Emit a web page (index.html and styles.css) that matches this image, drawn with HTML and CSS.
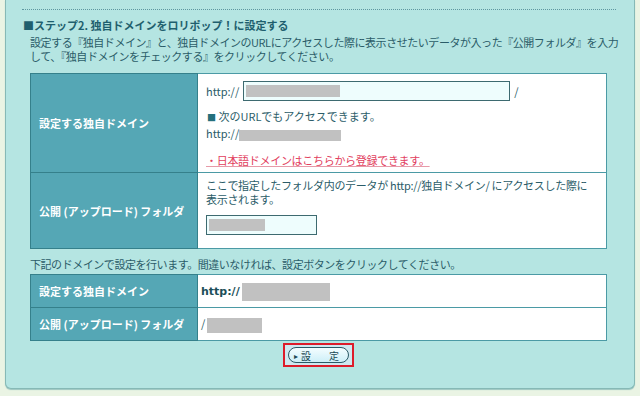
FILE: index.html
```html
<!DOCTYPE html>
<html lang="ja">
<head>
    <meta charset="UTF-8">
    <meta name="viewport" content="width=device-width, initial-scale=1.0">
    <link rel="stylesheet" href="styles.css">
    <title>独自ドメイン設定</title>
</head>
<body>
    <div class="panel">
        <div class="divider"></div>

        <h3 class="step-title">■ステップ2. 独自ドメインをロリポップ！に設定する</h3>
        <p class="lead">設定する『独自ドメイン』と、独自ドメインのURLにアクセスした際に表示させたいデータが入った『公開フォルダ』を入力して、『独自ドメインをチェックする』をクリックしてください。</p>

        <table class="form-table">
            <tr class="row-domain">
                <th>設定する独自ドメイン</th>
                <td>
                    <div class="url-line">
                        <span>http://</span>
                        <span class="text-box wide"><span class="mask mask-a"></span></span>
                        <span>/</span>
                    </div>
                    <p class="note"><span class="sq">■</span> 次のURLでもアクセスできます。</p>
                    <p class="alt-url">http://<span class="mask mask-b"></span></p>
                    <a class="jp-link" href="#">・日本語ドメインはこちらから登録できます。</a>
                </td>
            </tr>
            <tr class="row-folder">
                <th>公開 (アップロード) フォルダ</th>
                <td>
                    <p class="folder-desc">ここで指定したフォルダ内のデータが http://独自ドメイン/ にアクセスした際に表示されます。</p>
                    <span class="text-box short"><span class="mask mask-c"></span></span>
                </td>
            </tr>
        </table>

        <p class="lead confirm">下記のドメインで設定を行います。間違いなければ、設定ボタンをクリックしてください。</p>

        <table class="form-table confirm-table">
            <tr>
                <th>設定する独自ドメイン</th>
                <td><b class="url-bold">http://</b><span class="mask mask-d"></span></td>
            </tr>
            <tr>
                <th>公開 (アップロード) フォルダ</th>
                <td>/<span class="mask mask-e"></span></td>
            </tr>
        </table>

        <div class="btn-area">
            <span class="btn-frame">
                <button class="btn-set"><span class="arrow">▸</span><span class="btn-gap">設</span>定</button>
            </span>
        </div>
    </div>
</body>
</html>
```

FILE: styles.css
```css
body {
    margin: 0;
    background-color: #eaf4e4;
    font-family: "Noto Sans CJK JP", "Noto Sans", sans-serif;
    font-size: 11px;
    color: #2b5c68;
    height: 396px;
    overflow: hidden;
}

.panel {
    margin: 0 5px;
    height: 389px;
    box-sizing: border-box;
    background-color: #b5e5e2;
    border: 1px solid #86b9b6;
    border-top: none;
    border-radius: 0 0 6px 6px;
    box-shadow: 0 1px 1px #9cc6c0;
    padding: 9px 0 0 0;
}

.divider {
    margin: 0 18px 0 16px;
    border-top: 1px dotted #5e97a0;
}

.step-title {
    margin: 8px 0 0 17px;
    font-size: 11px;
    line-height: 14px;
    font-weight: bold;
    color: #1f5f6e;
}

.lead {
    margin: 3px 8px 0 24px;
    line-height: 14px;
    letter-spacing: -0.45px;
}

.form-table {
    margin: 10px 0 0 24px;
    width: 577px;
    border-collapse: collapse;
    border: 1px solid #35808b;
}

.form-table th {
    width: 158px;
    background-color: #55a7b5;
    color: #fff;
    text-align: left;
    padding: 0 0 0 8px;
    font-weight: bold;
    border: 1px solid #35808b;
}

.form-table td {
    background-color: #fff;
    border: 1px solid #4b9aa5;
    vertical-align: top;
    padding: 0 8px;
}

.row-domain {
    height: 99px;
}

.row-folder {
    height: 76px;
}

.url-line {
    display: flex;
    align-items: center;
    gap: 4px;
    margin-top: 7px;
}

.text-box {
    display: inline-block;
    height: 20px;
    box-sizing: border-box;
    background-color: #eefdfd;
    border: 1px solid #3d6a70;
    padding: 3px 2px;
}

.text-box.wide {
    width: 267px;
}

.text-box.short {
    width: 111px;
    margin-top: 9px;
    margin-bottom: 9px;
}

.mask {
    display: inline-block;
    background-color: #c1c1c1;
    vertical-align: top;
}

.mask-a { width: 94px; height: 12px; }
.mask-b { width: 102px; height: 11px; vertical-align: middle; }
.mask-c { width: 56px; height: 12px; }
.mask-d { width: 88px; height: 18px; margin-left: 2px; vertical-align: middle; }
.mask-e { width: 55px; height: 15px; margin-left: 2px; vertical-align: middle; }

.note {
    margin: 8px 0 0 1px;
    line-height: 14px;
}

.sq {
    color: #24707c;
    font-size: 9px;
}

.alt-url {
    margin: 1px 0 0;
    line-height: 14px;
}

.jp-link {
    display: inline-block;
    margin-top: 12px;
    color: #e2405e;
    text-decoration: underline;
    text-decoration-color: #e79aa8;
    line-height: 14px;
    letter-spacing: -0.3px;
}

.folder-desc {
    margin: 5px 0 0;
    line-height: 14px;
    letter-spacing: -0.3px;
}

.confirm {
    margin-top: 8px;
}

.confirm-table {
    margin-top: 3px;
}

.confirm-table tr {
    height: 33px;
}

.confirm-table td {
    vertical-align: middle;
    padding: 0 3px;
}

.url-bold {
    font-family: "DejaVu Sans", sans-serif;
    font-size: 11px;
    color: #1c4e58;
    vertical-align: middle;
}

.btn-area {
    display: flex;
    justify-content: center;
    margin: 2px 0 0 24px;
    width: 577px;
}

.btn-frame {
    display: inline-block;
    border: 2px solid #dd1c2a;
    padding: 2px 3px;
    background-color: #cfe8f0;
}

.btn-set {
    display: flex;
    align-items: center;
    width: 61px;
    height: 16px;
    padding: 0 0 0 5px;
    border: 1px solid #2c5a66;
    border-radius: 8px;
    background: linear-gradient(#f4fdff, #cdeff8);
    font-family: "Noto Sans CJK JP", sans-serif;
    font-size: 10px;
    line-height: 13px;
    color: #1c4a55;
    white-space: nowrap;
    cursor: pointer;
}

.arrow {
    font-size: 8px;
    margin-right: 3px;
}

.btn-gap {
    margin-right: 18px;
}
```
